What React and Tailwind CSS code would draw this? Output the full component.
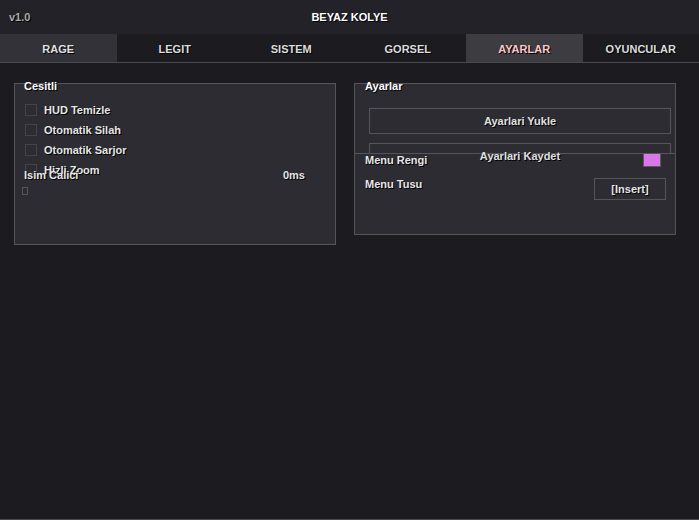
import React from "react";

const sh = "[text-shadow:1px_1px_0_#000]";

function Check({ label }) {
  return (
    <div className="flex items-center h-[20px]">
      <div className="w-[12px] h-[12px] border border-[#44434a] ml-[11px]" />
      <span className={`ml-[7px] text-[#e6e6e6] ${sh}`}>{label}</span>
    </div>
  );
}

export default function App() {
  const tabs = ["RAGE", "LEGIT", "SISTEM", "GORSEL", "AYARLAR", "OYUNCULAR"];
  return (
    <div className="w-[699px] h-[520px] bg-[#1c1b20] flex flex-col font-['Liberation_Sans',Arial,sans-serif] font-bold text-[11px] leading-none border-b border-[#4a494f]">
      <div className="h-[34px] bg-[#232228] grid grid-cols-[1fr_auto_1fr] items-center">
        <span className={`pl-[9px] text-[#a9a9ad] ${sh}`}>v1.0</span>
        <span className={`text-white ${sh}`}>BEYAZ KOLYE</span>
        <span />
      </div>
      <div className="h-[29px] flex border-b border-[#4a494f]">
        {tabs.map((t, i) => (
          <div
            key={t}
            className={`flex-1 flex items-center justify-center pt-[2px] ${sh} ${
              i === 0 ? "bg-[#333238] text-[#e0e0e0]" : i === 4 ? "bg-[#3d3c41] text-[#ffc6cc]" : "bg-[#1c1b20] text-[#dcdcdc]"
            }`}
          >
            {t}
          </div>
        ))}
      </div>
      <div className="flex pt-[20px] pl-[14px] gap-[18px]">
        <div className="relative w-[322px] h-[162px] bg-[#2d2c32] border border-[#555459]">
          <span className={`absolute left-[9px] top-[-3px] text-white ${sh}`}>Cesitli</span>
          <div className="pt-[16px] -ml-[1px]">
            <Check label="HUD Temizle" />
            <Check label="Otomatik Silah" />
            <Check label="Otomatik Sarjor" />
            <Check label="Hizli Zoom" />
          </div>
          <div className="relative -mt-[10px] flex justify-between pl-[9px] pr-[30px]">
            <span className={`text-[#e6e6e6] ${sh}`}>Isim Calici</span>
            <span className={`text-[#e6e6e6] ${sh}`}>0ms</span>
          </div>
          <div className="ml-[7px] mt-[6px] w-[6px] h-[8px] border border-[#555459]" />
        </div>
        <div className="relative w-[322px] h-[152px] bg-[#2d2c32] border border-[#555459]">
          <span className={`absolute left-[10px] top-[-3px] text-white ${sh}`}>Ayarlar</span>
          <div className="pt-[24px] pl-[14px] pr-[4px] flex flex-col gap-[9px]">
            <div className={`h-[26px] border border-[#555459] flex items-center justify-center text-[#e0e0e0] ${sh}`}>
              Ayarlari Yukle
            </div>
            <div className={`h-[26px] border border-[#555459] flex items-center justify-center text-[#e0e0e0] ${sh}`}>
              <span className="relative z-10">Ayarlari Kaydet</span>
            </div>
          </div>
          <div className="absolute left-[-1px] right-[-1px] top-[69px] bottom-[-1px] border border-[#555459] bg-[#2d2c32]">
            <div className="flex items-start justify-between pl-[10px] pr-[14px]">
              <span className={`mt-[1px] text-[#e6e6e6] ${sh}`}>Menu Rengi</span>
              <div className="w-[18px] h-[14px] -mt-[1px] bg-[#d878e8] border border-[#5a595e]" />
            </div>
            <div className="flex items-start justify-between pl-[10px] pr-[9px] mt-[12px]">
              <span className={`text-[#e6e6e6] ${sh}`}>Menu Tusu</span>
              <div className={`-mt-[1px] w-[72px] h-[22px] border border-[#555459] flex items-center justify-center text-[#e6e6e6] ${sh}`}>
                [Insert]
              </div>
            </div>
          </div>
        </div>
      </div>
    </div>
  );
}
